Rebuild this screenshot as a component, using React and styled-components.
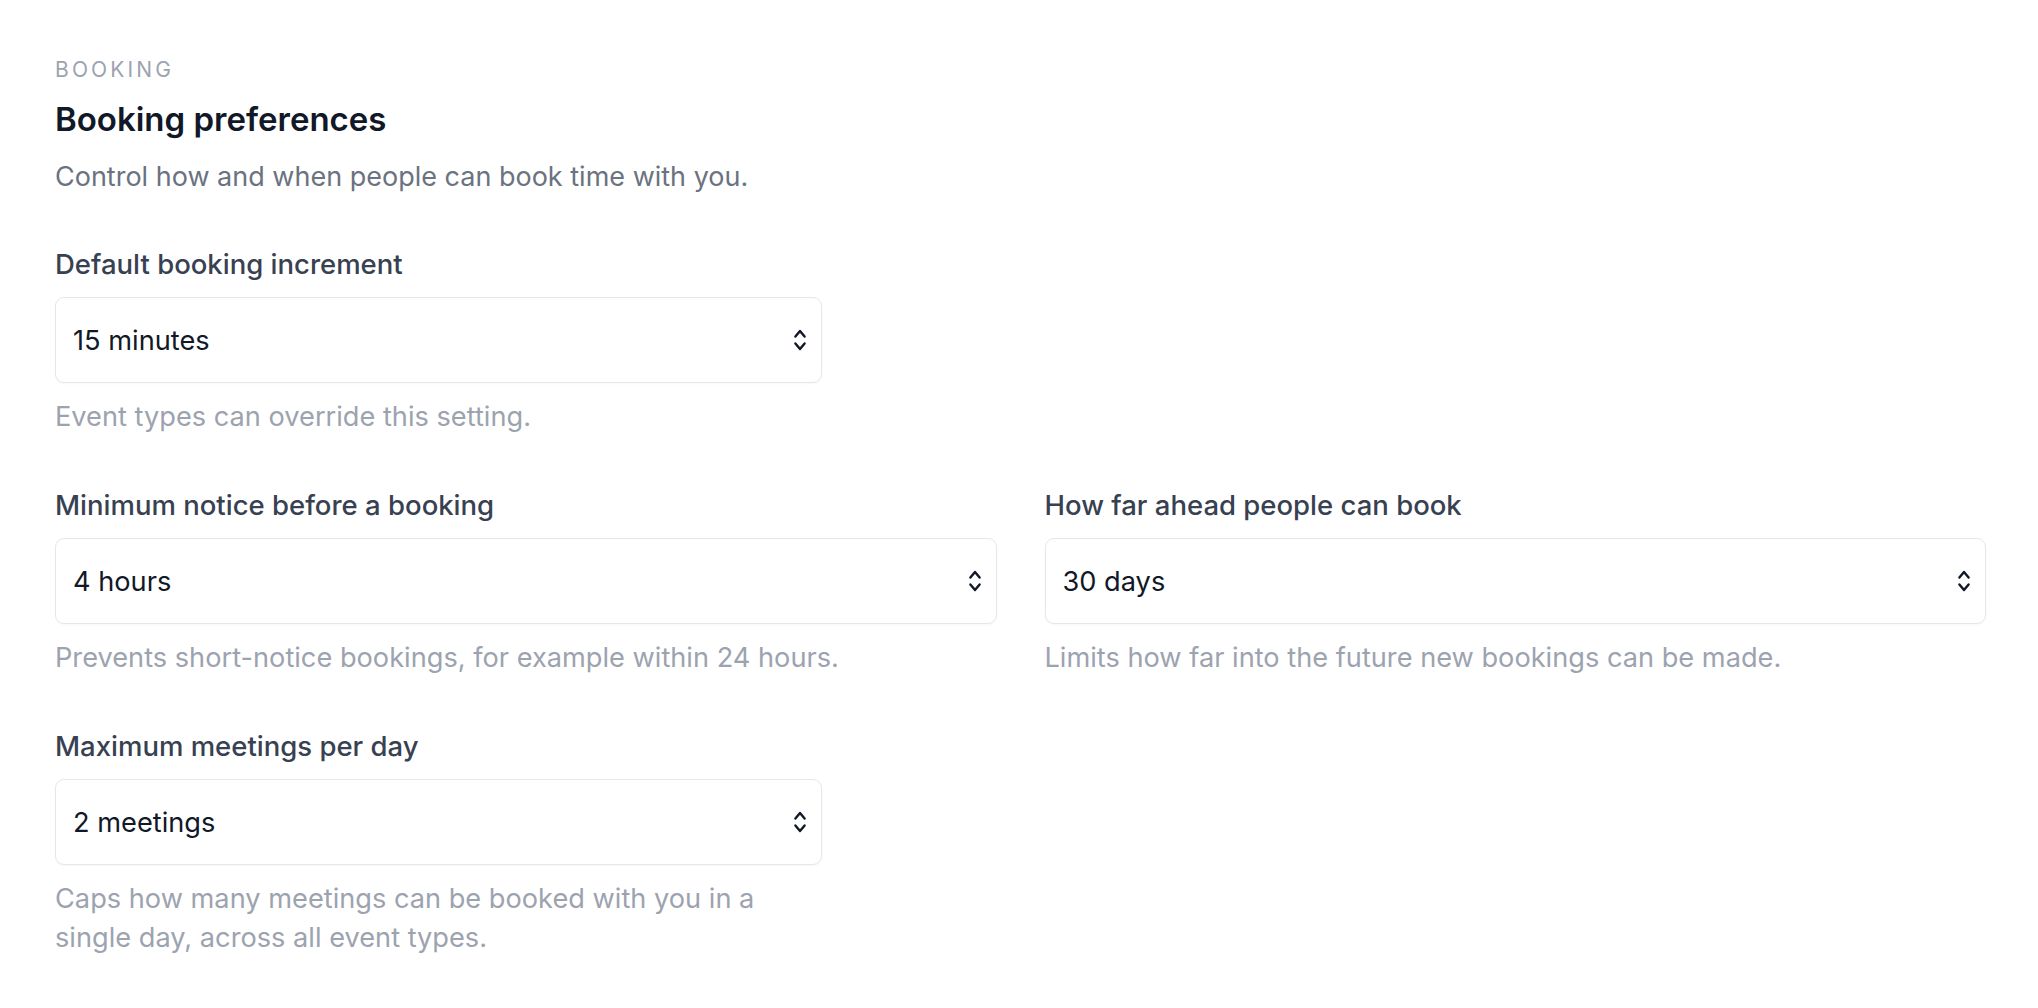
import React from 'react'
import styled, { createGlobalStyle } from 'styled-components'

const GlobalStyle = createGlobalStyle`
  html, body {
    margin: 0;
    padding: 0;
    background: #ffffff;
  }
  body {
    font-family: Inter, "Noto Sans", "Liberation Sans", sans-serif;
    -webkit-font-smoothing: antialiased;
  }
  * { box-sizing: border-box; }
`

const fields = [
  [
    {
      label: 'Default booking increment',
      value: '15 minutes',
      help: 'Event types can override this setting.',
      short: true,
    },
  ],
  [
    {
      label: 'Minimum notice before a booking',
      value: '4 hours',
      help: 'Prevents short-notice bookings, for example within 24 hours.',
    },
    {
      label: 'How far ahead people can book',
      value: '30 days',
      help: 'Limits how far into the future new bookings can be made.',
    },
  ],
  [
    {
      label: 'Maximum meetings per day',
      value: '2 meetings',
      help: 'Caps how many meetings can be booked with you in a single day, across all event types.',
      short: true,
    },
  ],
]

const ChevronsIcon = () => (
  <svg width="16" height="24" viewBox="0 0 16 24" fill="none">
    <path
      d="M3.4 8.6L8 3l4.6 5.6M3.4 15.4L8 21l4.6-5.6"
      stroke="#111827"
      strokeWidth="2.4"
      strokeLinecap="round"
      strokeLinejoin="round"
    />
  </svg>
)

const Field = ({ label, value, help, short }) => (
  <FieldBox short={short}>
    <Label>{label}</Label>
    <SelectButton type="button">
      <span>{value}</span>
      <ChevronsIcon />
    </SelectButton>
    <Help>{help}</Help>
  </FieldBox>
)

const App = () => {
  return (
    <>
      <GlobalStyle />
      <Page>
        <Eyebrow>Booking</Eyebrow>
        <Title>Booking preferences</Title>
        <Intro>Control how and when people can book time with you.</Intro>
        <Rows>
          {fields.map((row, i) => (
            <Row key={i} cols={row.length}>
              {row.map((f) => (
                <Field key={f.label} {...f} />
              ))}
            </Row>
          ))}
        </Rows>
      </Page>
    </>
  )
}

const Page = styled.div`
  padding: 55px 52px 40px 55px;
  display: flex;
  flex-direction: column;
`

const Eyebrow = styled.div`
  font-size: 21px;
  line-height: 30px;
  letter-spacing: 0.15em;
  text-transform: uppercase;
  color: #9ca3af;
`

const Title = styled.h1`
  margin: 13px 0 0;
  font-size: 33px;
  line-height: 42px;
  font-weight: 600;
  letter-spacing: 0;
  color: #111827;
`

const Intro = styled.p`
  margin: 17px 0 0;
  font-size: 27px;
  line-height: 39px;
  color: #6b7280;
`

const Rows = styled.div`
  margin-top: 49px;
  display: flex;
  flex-direction: column;
  gap: 50px;
`

const Row = styled.div`
  display: grid;
  grid-template-columns: ${(p) => (p.cols > 1 ? 'repeat(2, 1fr)' : '1fr')};
  column-gap: 48px;
`

const FieldBox = styled.div`
  display: flex;
  flex-direction: column;
  max-width: ${(p) => (p.short ? '767px' : 'none')};
`

const Label = styled.div`
  font-size: 27.5px;
  line-height: 39px;
  font-weight: 500;
  color: #374151;
`

const SelectButton = styled.button`
  margin-top: 13px;
  height: 86px;
  width: 100%;
  display: flex;
  align-items: center;
  justify-content: space-between;
  padding: 0 13px 0 17px;
  background: #ffffff;
  border: 1.3px solid #e5e7eb;
  border-radius: 9px;
  box-shadow: 0 1px 2px rgba(17, 24, 39, 0.03);
  font-family: inherit;
  font-size: 27.2px;
  color: #111827;
  text-align: left;
  cursor: pointer;
`

const Help = styled.div`
  margin-top: 14px;
  font-size: 27.2px;
  line-height: 39px;
  color: #9ca3af;
`

export default App
